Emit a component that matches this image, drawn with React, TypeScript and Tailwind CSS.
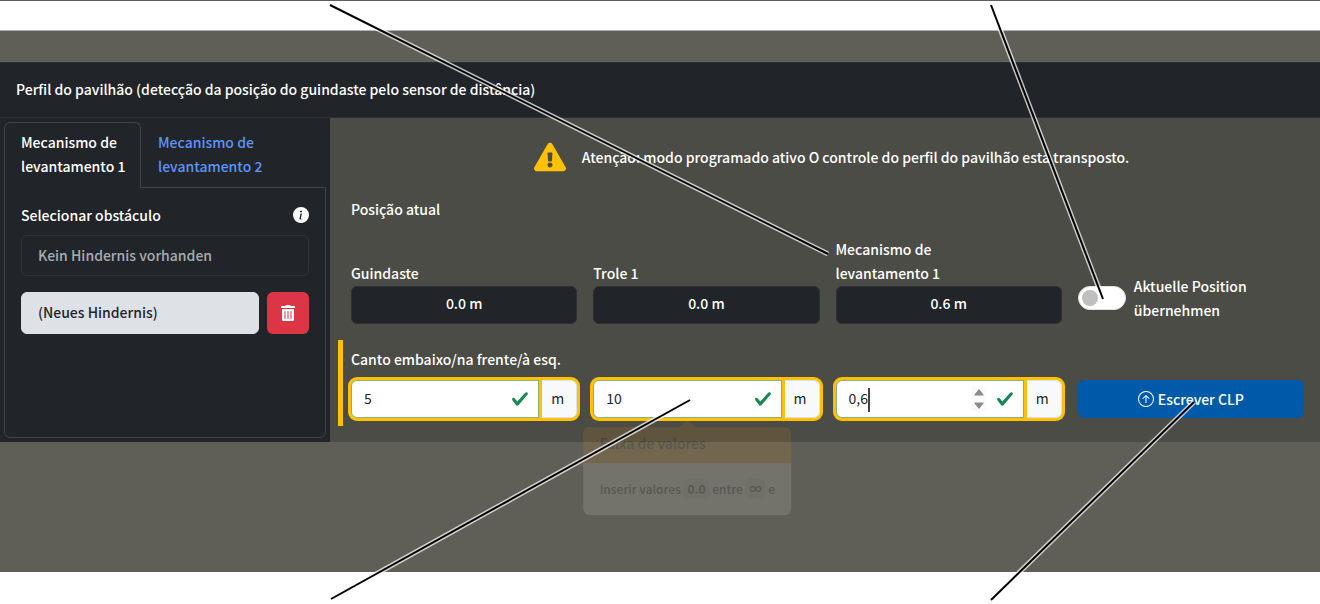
import type { ReactNode } from "react";
import { BsArrowUpCircle, BsInfoCircleFill } from "react-icons/bs";
import { FaExclamationTriangle, FaTrashAlt } from "react-icons/fa";

const callouts = [
  { x1: 330, y1: 5, x2: 828, y2: 254 },
  { x1: 991, y1: 5, x2: 1103, y2: 299 },
  { x1: 331, y1: 599, x2: 690, y2: 400 },
  { x1: 991, y1: 600, x2: 1194, y2: 402 },
];

function CheckIcon() {
  return (
    <svg viewBox="0 0 8 8" className="size-[18px] shrink-0 text-[#198754]" fill="currentColor" aria-hidden="true">
      <path d="M2.3 6.73L.6 4.53c-.4-1.04.46-1.4 1.1-.8l1.1 1.4 3.4-3.8c.6-.63 1.6-.27 1.2.7l-4 4.6c-.43.5-.8.4-1.1.1z" />
    </svg>
  );
}

function SpinButtons() {
  return (
    <svg viewBox="0 0 14 24" className="h-6 w-3.5 bg-[#fafafa]" fill="#8b8b8b" aria-hidden="true">
      <path d="M2.5 7.5 7 2l4.5 5.5v1h-9zM2.5 16.5 7 22l4.5-5.5v-1h-9z" />
    </svg>
  );
}

function PositionValue({ label, value }: { label: string; value: string }) {
  return (
    <div className="flex flex-col justify-end">
      <span className="mb-px max-w-32">{label}</span>
      <output className="rounded-md border border-[#2c3034] bg-[#212529] pt-1 pb-2 text-center">{value}</output>
    </div>
  );
}

interface ValueInputProps {
  label: string;
  value: string;
  focused?: boolean;
  children?: ReactNode;
}

function ValueInput({ label, value, focused, children }: ValueInputProps) {
  return (
    <div className="flex text-[#212529]">
      <div className="relative z-10 min-w-0 flex-1">
        <input
          type="text"
          inputMode="decimal"
          aria-label={label}
          defaultValue={value}
          className="h-[38px] w-full rounded-l-md border border-[#8fae75] bg-white px-3 pb-0.5 font-normal ring-3 ring-[#ffc107] outline-none"
        />
        <div className="pointer-events-none absolute inset-y-0 right-2.5 flex items-center gap-2.5">
          {focused && <SpinButtons />}
          <CheckIcon />
        </div>
        {focused && <span className="absolute top-2 left-8 h-6 w-0.5 bg-[#444444]" aria-hidden="true" />}
        {children}
      </div>
      <span className="-ml-px flex w-[39px] items-center justify-center rounded-r-md border border-[#dee2e6] bg-[#f8f9fa] pb-0.5 font-normal ring-3 ring-[#ffc107]">
        m
      </span>
    </div>
  );
}

function RangeTooltip() {
  return (
    <div
      role="tooltip"
      className="absolute top-full left-1/2 mt-[9px] -translate-x-1/2 whitespace-nowrap text-[#212529] opacity-12"
    >
      <svg viewBox="0 0 16 6" className="absolute bottom-full left-1/2 h-1.5 w-4 -translate-x-1/2" fill="#f09a10" aria-hidden="true">
        <path d="M0 6 7 0h2l7 6z" />
      </svg>
      <div className="rounded-t-md bg-[#f09a10] px-4 pt-1 pb-2 leading-6">Faixa de valores</div>
      <div className="rounded-b-md bg-white px-4 py-4 text-[12px] leading-5">
        Inserir valores <b className="rounded-md bg-[#e4e7e9] px-1 py-0.5">0.0</b> entre{" "}
        <b className="rounded-md bg-[#e4e7e9] px-1 py-0.5">∞</b> e
      </div>
    </div>
  );
}

function Sidebar() {
  return (
    <aside className="flex w-1/4 flex-col bg-[#212529] p-1">
      <div className="flex" role="tablist">
        <button
          type="button"
          role="tab"
          aria-selected="true"
          className="relative z-10 -mb-px w-[137px] rounded-t-md border border-b-0 border-[#3d4247] bg-[#212529] pt-[7px] pr-2 pb-[10px] pl-4 text-left"
        >
          Mecanismo de levantamento 1
        </button>
        <button
          type="button"
          role="tab"
          aria-selected="false"
          className="w-[137px] pt-2 pr-2 pb-[9px] pl-[17px] text-left text-[#5c94f7]"
        >
          Mecanismo de levantamento 2
        </button>
      </div>
      <div className="flex-1 rounded-b-md border border-[#3d4247] px-4 py-[15px]">
        <div className="flex items-center justify-between">
          <span>Selecionar obstáculo</span>
          <BsInfoCircleFill className="size-4" />
        </div>
        <div className="mt-2 rounded-md border border-[#2e3338] px-4 pt-[7px] pb-2 text-[#a7acb1]">Kein Hindernis vorhanden</div>
        <div className="mt-4 flex gap-2">
          <button
            type="button"
            className="flex-1 rounded-md border border-[#dee2e6] bg-[#dee2e6] px-4 pt-[7px] pb-[9px] text-left text-[#212529]"
          >
            (Neues Hindernis)
          </button>
          <button
            type="button"
            aria-label="Löschen"
            className="flex w-[42px] items-center justify-center rounded-md bg-[#dc3545]"
          >
            <FaTrashAlt className="size-4" />
          </button>
        </div>
      </div>
    </aside>
  );
}

export default function App() {
  return (
    <div className="relative flex min-h-screen flex-col border-t border-[#605f57] bg-white font-['Noto_Sans_CJK_SC','Noto_Sans',sans-serif] text-[14px] leading-6 font-medium text-white">
      <div className="mt-[29px] mb-8 flex flex-1 flex-col border-t border-[#b4b4ae] bg-[#605f57] pt-[31px]">
        <header className="border-y border-[#2c3034] bg-[#212529] px-4 pt-3.5 pb-4">
          <h1>Perfil do pavilhão (detecção da posição do guindaste pelo sensor de distância)</h1>
        </header>

        <div className="flex">
          <Sidebar />

          <main className="flex-1 bg-[#4b4c45] pt-[23px] pr-4 pb-4 pl-2">
            <div className="pl-[13px]">
              <div className="flex items-center justify-center gap-4 pl-2" role="alert">
                <FaExclamationTriangle className="size-8 text-[#ffc107]" />
                <p>Atenção: modo programado ativo O controle do perfil do pavilhão está transposto.</p>
              </div>
              <h2 className="mt-6">Posição atual</h2>
              <div className="mt-4 grid grid-cols-4 gap-4">
                <PositionValue label="Guindaste" value="0.0 m" />
                <PositionValue label="Trole 1" value="0.0 m" />
                <PositionValue label="Mecanismo de levantamento 1" value="0.6 m" />
                <label className="flex items-center gap-2 self-end pb-0.5">
                  <input
                    type="checkbox"
                    role="switch"
                    className="h-6 w-12 shrink-0 appearance-none rounded-full border border-[#dee2e6] bg-white before:m-[3px] before:block before:size-4 before:rounded-full before:bg-[#bfbfbf]"
                  />
                  <span className="max-w-32">Aktuelle Position übernehmen</span>
                </label>
              </div>
            </div>

            <section className="mt-4 border-l-[5px] border-[#ffc107] pt-[7px] pb-2 pl-2">
              <h2 className="mb-[9px]">Canto embaixo/na frente/à esq.</h2>
              <div className="grid grid-cols-4 gap-4">
                <ValueInput label="Guindaste" value="5" />
                <ValueInput label="Trole 1" value="10">
                  <RangeTooltip />
                </ValueInput>
                <ValueInput label="Mecanismo de levantamento 1" value="0,6" focused />
                <button
                  type="button"
                  className="flex items-center justify-center gap-1 rounded-md bg-[#005aaa]"
                >
                  <BsArrowUpCircle className="size-4" />
                  Escrever CLP
                </button>
              </div>
            </section>
          </main>
        </div>
      </div>

      <svg className="pointer-events-none absolute -top-px left-0 z-20 size-full overflow-visible" aria-hidden="true">
        {callouts.map((line) => (
          <g key={line.x1 + "-" + line.y1}>
            <line {...line} stroke="#ffffff" strokeOpacity="0.7" strokeWidth="5" />
            <line {...line} stroke="#000000" strokeWidth="2" />
          </g>
        ))}
      </svg>
    </div>
  );
}
